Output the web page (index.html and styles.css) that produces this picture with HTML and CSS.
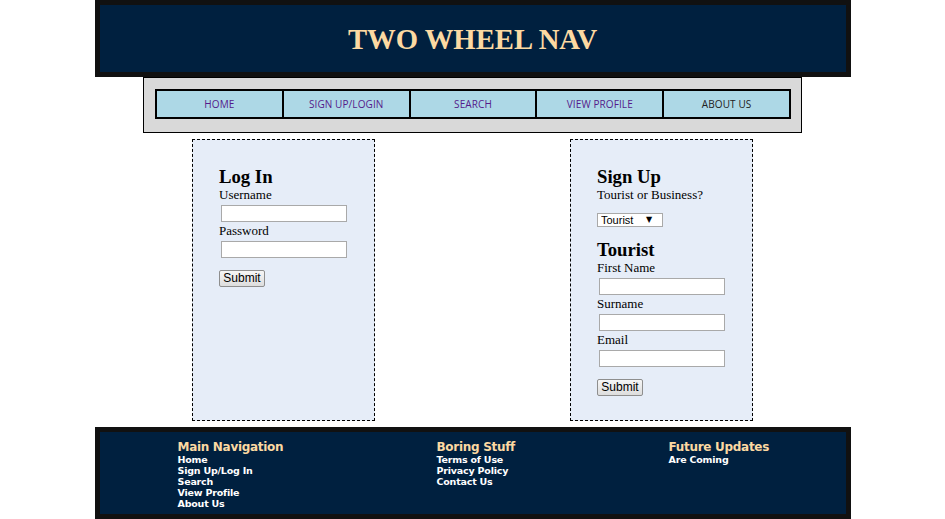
FILE: index.html
```html
<!DOCTYPE html>
<html lang="en">
<head>
<meta charset="utf-8">
<title>Two Wheel Nav</title>
<link rel="stylesheet" href="styles.css">
</head>
<body>
<header class="site-header">
  <h1 class="site-title">TWO WHEEL NAV</h1>
</header>
<nav class="main-nav">
  <ul class="nav-list">
    <li class="nav-item"><a class="nav-link visited" href="#">HOME</a></li>
    <li class="nav-item"><a class="nav-link visited" href="#">SIGN UP/LOGIN</a></li>
    <li class="nav-item"><a class="nav-link visited" href="#">SEARCH</a></li>
    <li class="nav-item"><a class="nav-link visited" href="#">VIEW PROFILE</a></li>
    <li class="nav-item"><a class="nav-link current" href="#">ABOUT US</a></li>
  </ul>
</nav>
<main class="content">
  <section class="card">
    <h3 class="card-title">Log In</h3>
    <form class="form">
      <label class="field-label">Username</label>
      <input class="text-input" type="text">
      <label class="field-label">Password</label>
      <input class="text-input" type="password">
      <button class="submit-btn" type="button">Submit</button>
    </form>
  </section>
  <section class="card">
    <h3 class="card-title">Sign Up</h3>
    <form class="form">
      <label class="field-label">Tourist or Business?</label>
      <span class="select-box"><select class="select"><option>Tourist</option><option>Business</option></select><span class="select-arrow">▼</span></span>
      <h3 class="card-title">Tourist</h3>
      <label class="field-label">First Name</label>
      <input class="text-input" type="text">
      <label class="field-label">Surname</label>
      <input class="text-input" type="text">
      <label class="field-label">Email</label>
      <input class="text-input" type="text">
      <button class="submit-btn" type="button">Submit</button>
    </form>
  </section>
</main>
<footer class="site-footer">
  <div class="footer-col">
    <h4 class="footer-heading">Main Navigation</h4>
    <a class="footer-link" href="#">Home</a>
    <a class="footer-link" href="#">Sign Up/Log In</a>
    <a class="footer-link" href="#">Search</a>
    <a class="footer-link" href="#">View Profile</a>
    <a class="footer-link" href="#">About Us</a>
  </div>
  <div class="footer-col">
    <h4 class="footer-heading">Boring Stuff</h4>
    <a class="footer-link" href="#">Terms of Use</a>
    <a class="footer-link" href="#">Privacy Policy</a>
    <a class="footer-link" href="#">Contact Us</a>
  </div>
  <div class="footer-col">
    <h4 class="footer-heading">Future Updates</h4>
    <a class="footer-link" href="#">Are Coming</a>
  </div>
</footer>
</body>
</html>
```

FILE: styles.css
```css
* { box-sizing: border-box; }

body {
  margin: 0;
  background: #ffffff;
  font-family: "Liberation Serif", "Times New Roman", serif;
}

.site-header {
  width: 756px;
  height: 77px;
  margin: 0 auto;
  border: 5px solid #111111;
  background: #00203f;
  display: flex;
  align-items: center;
  justify-content: center;
}

.site-title {
  margin: 0;
  font-family: "Liberation Serif", serif;
  font-size: 28.7px;
  font-weight: bold;
  color: #fcd9a2;
  line-height: 32px;
  padding-top: 1px;
}

.main-nav {
  width: 659px;
  margin: 0 auto;
  border: 1px solid #000000;
  background: #d9d9d9;
  padding: 11px 10px 13px 11px;
}

.nav-list {
  list-style: none;
  margin: 0;
  padding: 0;
  display: grid;
  grid-template-columns: repeat(5, 1fr);
  border: 2px solid #000000;
  border-left: none;
  background: #add8e6;
}

.nav-item {
  height: 26px;
  border-left: 2px solid #000000;
  display: flex;
  align-items: center;
  justify-content: center;
}

.nav-link {
  font-family: "Open Sans", sans-serif;
  font-size: 10px;
  text-decoration: none;
  letter-spacing: 0.1px;
}

.nav-link.visited { color: #551a8b; }
.nav-link.current { color: #222222; }

.content {
  width: 756px;
  margin: 6px auto 0;
  display: grid;
  grid-template-columns: 1fr 1fr;
}

.card {
  justify-self: center;
  width: 183px;
  height: 282px;
  border: 1px dashed #000000;
  background: #e6edf8;
  padding: 26px 10px 0 26px;
}

.card-title {
  margin: 0;
  font-size: 18.72px;
  line-height: 21px;
  font-weight: bold;
  color: #000000;
}

.form {
  display: flex;
  flex-direction: column;
  align-items: flex-start;
}

.field-label {
  display: block;
  font-size: 13px;
  line-height: 15px;
  color: #000000;
}

.text-input {
  display: block;
  width: 126px;
  height: 17px;
  margin: 3px 0 1px 2px;
  border: 1px solid #a9a9a9;
  background: #ffffff;
  padding: 0 2px;
  font-size: 12px;
}

.submit-btn {
  margin-top: 11px;
  width: 46px;
  height: 17px;
  padding: 0;
  border: 1px solid #8e8e8e;
  border-radius: 2px;
  background: linear-gradient(#f6f6f6, #dddddd);
  font-family: "Liberation Sans", Arial, sans-serif;
  font-size: 12px;
  line-height: 15px;
  color: #000000;
}

.select-box {
  margin-top: 11px;
  margin-bottom: 12px;
  width: 66px;
  height: 14px;
  border: 1px solid #a9a9a9;
  background: #ffffff;
  display: flex;
  align-items: center;
}

.select {
  appearance: none;
  -webkit-appearance: none;
  border: none;
  background: transparent;
  padding: 0 0 0 3px;
  margin: 0;
  width: 48px;
  height: 12px;
  font-family: "Liberation Sans", Arial, sans-serif;
  font-size: 11px;
  line-height: 12px;
  color: #000000;
  outline: none;
}

.select-arrow {
  font-family: "DejaVu Sans", sans-serif;
  font-size: 8px;
  line-height: 12px;
  color: #000000;
}

.site-footer {
  width: 756px;
  height: 92px;
  margin: 6px auto 0;
  border: 5px solid #111111;
  background: #00203f;
  padding: 8px 0 0 78px;
  display: grid;
  grid-template-columns: 259px 232px auto;
  align-items: start;
}

.footer-col {
  display: flex;
  flex-direction: column;
}

.footer-heading {
  margin: 0;
  font-family: "DejaVu Sans", Verdana, sans-serif;
  font-size: 12px;
  line-height: 14px;
  font-weight: bold;
  color: #fcd9a2;
  letter-spacing: -0.3px;
}

.footer-link {
  font-family: "DejaVu Sans", Verdana, sans-serif;
  font-size: 9.5px;
  line-height: 11px;
  font-weight: bold;
  color: #ffffff;
  text-decoration: none;
  letter-spacing: -0.2px;
}
```
